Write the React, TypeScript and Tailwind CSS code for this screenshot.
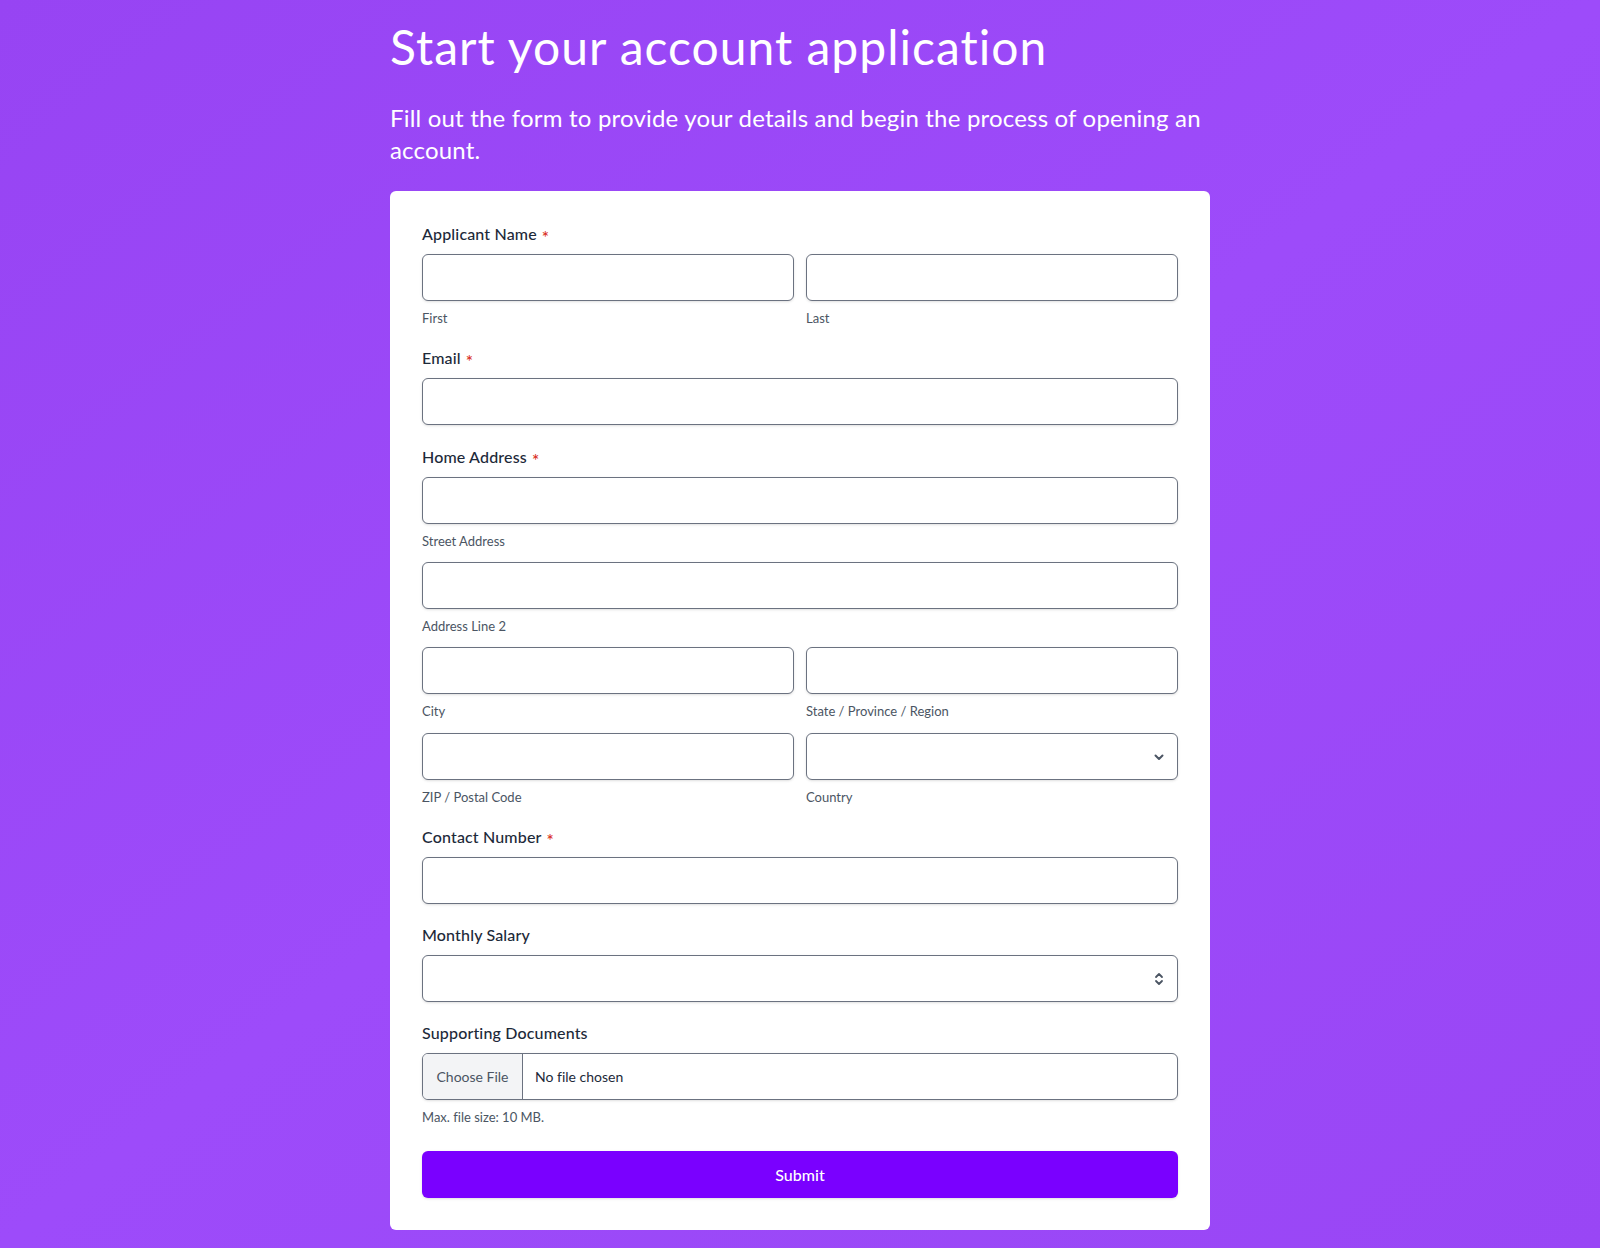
import type { ReactNode } from 'react';

/**
 * Account application form
 * Purple landing background with a white card holding the form fields
 */

function Label({ children, required }: { children: ReactNode; required?: boolean }) {
  return (
    <div className="flex items-center gap-[5px] h-6 mb-2">
      <span className="text-base font-medium text-[#1d2939] leading-6 tracking-[0.01em]">{children}</span>
      {required && <span className="text-[17px] font-medium text-[#d92d20] leading-none mt-[7px]">*</span>}
    </div>
  );
}

function Hint({ children }: { children: ReactNode }) {
  return <div className="mt-[9px] text-[13px] leading-4 text-[#4b5563]">{children}</div>;
}

function TextInput() {
  return (
    <input
      type="text"
      className="block w-full h-[47px] px-3 rounded-md border border-[#6b7280] bg-white shadow-sm text-base text-[#1d2939] outline-none"
    />
  );
}

function ChevronDown() {
  return (
    <svg width="12" height="12" viewBox="0 0 12 12" fill="none" stroke="#4b5563" strokeWidth="2" strokeLinecap="round" strokeLinejoin="round">
      <path d="M2.5 4.5 6 8l3.5-3.5" />
    </svg>
  );
}

function ChevronUpDown() {
  return (
    <svg width="12" height="16" viewBox="0 0 12 16" fill="none" stroke="#4b5563" strokeWidth="1.8" strokeLinecap="round" strokeLinejoin="round">
      <path d="M3 6 6 3l3 3" />
      <path d="M3 10l3 3 3-3" />
    </svg>
  );
}

function SelectBox({ icon }: { icon: ReactNode }) {
  return (
    <div className="flex items-center justify-end w-full h-[47px] pr-[12px] rounded-md border border-[#6b7280] bg-white shadow-sm">
      {icon}
    </div>
  );
}

export default function App() {
  return (
    <div
      className="min-h-screen w-full bg-linear-to-br from-[#9744f3] via-[#9d4bfa] to-[#9946f5] pb-[18px] [font-variant-ligatures:none]"
      style={{ fontFamily: 'Lato, "Noto Sans", sans-serif' }}
    >
      <div className="w-[820px] mx-auto pt-[23px]">
        {/* Header */}
        <h1 className="text-5xl leading-none font-normal text-white tracking-[0.021em]">
          Start your account application
        </h1>
        <p className="mt-[31px] text-2xl leading-8 text-white tracking-[0.008em]">
          Fill out the form to provide your details and begin the process of opening an account.
        </p>

        {/* Form card */}
        <form className="mt-[25px] bg-white rounded-md px-8 pt-[31px] pb-8" onSubmit={e => e.preventDefault()}>
          {/* Applicant name */}
          <div>
            <Label required>Applicant Name</Label>
            <div className="grid grid-cols-2 gap-3">
              <div>
                <TextInput />
                <Hint>First</Hint>
              </div>
              <div>
                <TextInput />
                <Hint>Last</Hint>
              </div>
            </div>
          </div>

          {/* Email */}
          <div className="mt-5">
            <Label required>Email</Label>
            <TextInput />
          </div>

          {/* Home address */}
          <div className="mt-5">
            <Label required>Home Address</Label>
            <TextInput />
            <Hint>Street Address</Hint>
            <div className="mt-[13px]">
              <TextInput />
              <Hint>Address Line 2</Hint>
            </div>
            <div className="mt-[13px] grid grid-cols-2 gap-3">
              <div>
                <TextInput />
                <Hint>City</Hint>
              </div>
              <div>
                <TextInput />
                <Hint>State / Province / Region</Hint>
              </div>
            </div>
            <div className="mt-[14px] grid grid-cols-2 gap-3">
              <div>
                <TextInput />
                <Hint>ZIP / Postal Code</Hint>
              </div>
              <div>
                <SelectBox icon={<ChevronDown />} />
                <Hint>Country</Hint>
              </div>
            </div>
          </div>

          {/* Contact number */}
          <div className="mt-5">
            <Label required>Contact Number</Label>
            <TextInput />
          </div>

          {/* Monthly salary */}
          <div className="mt-[19px]">
            <Label>Monthly Salary</Label>
            <SelectBox icon={<ChevronUpDown />} />
          </div>

          {/* Supporting documents */}
          <div className="mt-[19px]">
            <Label>Supporting Documents</Label>
            <div className="flex h-[47px] rounded-md border border-[#6b7280] bg-white shadow-sm overflow-hidden">
              <div className="w-[100px] shrink-0 flex items-center justify-center bg-[#f3f4f6] border-r border-[#6b7280] text-sm text-[#4b5563]">
                Choose File
              </div>
              <div className="flex items-center pl-3 text-sm text-[#1d2939]">No file chosen</div>
            </div>
            <Hint>Max. file size: 10 MB.</Hint>
          </div>

          {/* Submit */}
          <button
            type="submit"
            className="mt-[26px] w-full h-[47px] rounded-md bg-[#7a00ff] text-white text-base font-medium shadow-sm"
          >
            Submit
          </button>
        </form>
      </div>
    </div>
  );
}
